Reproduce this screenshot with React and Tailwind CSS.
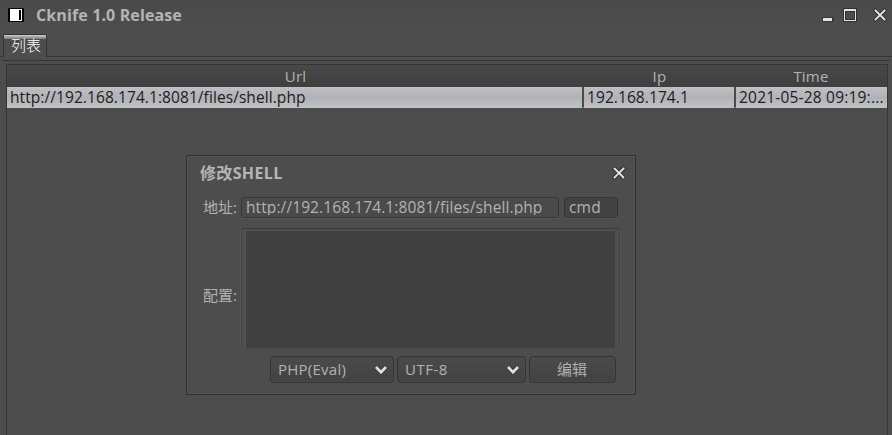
import React from 'react';

function CloseIcon() {
  return (
    <svg width="14" height="14" viewBox="0 0 14 14" fill="none" strokeLinecap="square">
      <path d="M2.5 2.5 11.5 11.5M11.5 2.5 2.5 11.5" stroke="#303030" strokeWidth="3.6" />
      <path d="M2.5 2.5 11.5 11.5M11.5 2.5 2.5 11.5" stroke="#e6e6e6" strokeWidth="1.8" />
    </svg>
  );
}

function Chevron() {
  return (
    <svg width="14" height="10" viewBox="0 0 14 10" fill="none">
      <path d="M2 2 7 7.2 12 2" stroke="#303030" strokeWidth="4.2" />
      <path d="M2 2 7 7.2 12 2" stroke="#dedede" strokeWidth="2.8" />
    </svg>
  );
}

function TitleBar() {
  return (
    <header className="flex h-[34px] items-start bg-gradient-to-b from-[#494949] to-[#4e4e4e]">
      <svg className="ml-2 mt-2" width="16" height="14" viewBox="0 0 16 14">
        <path fill="#000" d="M0 0h16v14H0z" />
        <path fill="#fff" d="M2 1h12v12H2z" />
        <path fill="#000" d="M11 2h2v10h-2z" />
      </svg>
      <h1 className="ml-3 mt-[5px] h-5 w-[240px] whitespace-nowrap text-[16px] font-bold leading-5 tracking-[0.12px] text-[#b5b5b5]">
        Cknife 1.0 Release
      </h1>
      <div className="ml-auto mr-[5px] mt-2 flex h-[14px]">
        <svg className="mr-[9px]" width="12" height="14" viewBox="0 0 12 14">
          <path fill="#373737" d="M0 9h12v5H0z" />
          <path fill="#e3e3e3" d="M1 10h9v3H1z" />
        </svg>
        <svg className="mr-[16px]" width="14" height="14" viewBox="0 0 14 14">
          <path fill="#303030" fillRule="evenodd" d="M0 0h14v14H0zM3 4v7h8V4z" />
          <path fill="#e3e3e3" fillRule="evenodd" d="M1 1h12v12H1zM2 3v9h10V3z" />
        </svg>
        <CloseIcon />
      </div>
    </header>
  );
}

function EditDialog() {
  return (
    <section className="absolute left-[186px] top-[155px] h-60 w-[450px] border border-[#303030] bg-[#4d4d4d] shadow-[inset_1px_1px_0_#555555,inset_-1px_-1px_0_#535353]">
      <div className="flex h-[41px] justify-between pl-[13px] pr-[9px] pt-[7px]">
        <h2 className="h-5 whitespace-nowrap text-[16px] font-bold leading-5 tracking-[0.35px] text-[#b5b5b5]">修改SHELL</h2>
        <div className="mt-[3px]"><CloseIcon /></div>
      </div>
      <div className="flex h-[21px]">
        <span className="w-[54px] whitespace-nowrap pl-4 text-[15px] leading-[21px]">地址:</span>
        <div className="h-[21px] w-[318px] overflow-hidden whitespace-nowrap rounded-[3px] border border-[#353535] bg-[#4a4a4a] pl-1 pb-[2px] shadow-[0_1px_0_#555555]">
          <div className="h-[17px] overflow-hidden text-[15.5px] leading-[19px] tracking-[0.1px]">http://192.168.174.1:8081/files/shell.php</div>
        </div>
        <div className="ml-[5px] h-[21px] w-[54px] rounded-[3px] border border-[#353535] bg-[#424242] pl-1 text-[15.5px] leading-[18px] tracking-[0.2px] shadow-[0_1px_0_#555555]">cmd</div>
      </div>
      <div className="mt-[10px] flex h-[120px]">
        <span className="w-[54px] whitespace-nowrap pl-4 pt-[57px] text-[15px] leading-[21px]">配置:</span>
        <div className="h-[120px] w-[379px] rounded-t-[3px] border-x border-t border-[#3a3a3a] border-x-[#424242] bg-[#505050] px-1 pt-[2px] shadow-[-1px_0_0_#555555,1px_0_0_#555555]">
          <div className="h-[117px] bg-[#404040]" />
        </div>
      </div>
      <div className="ml-[83px] mt-2 flex h-[27px] gap-[3px] text-[15px]">
        <div className="flex w-[124px] items-center justify-between rounded-sm border border-[#333333] bg-gradient-to-b from-[#4b4b4b] to-[#424242] pl-[7px] pr-[5px] shadow-[inset_0_0_0_1px_#494949]">
          <span className="tracking-[0.25px]">PHP(Eval)</span><Chevron />
        </div>
        <div className="flex w-[129px] items-center justify-between rounded-sm border border-[#333333] bg-gradient-to-b from-[#4b4b4b] to-[#424242] pl-[7px] pr-[5px] shadow-[inset_0_0_0_1px_#494949]">
          <span className="tracking-[0.5px]">UTF-8</span><Chevron />
        </div>
        <button className="w-[87px] rounded-sm border border-[#333333] bg-gradient-to-b from-[#4b4b4b] to-[#424242] pr-px shadow-[inset_0_0_0_1px_#494949]">编辑</button>
      </div>
    </section>
  );
}

export default function App() {
  return (
    <main className="relative flex h-[435px] w-[892px] flex-col overflow-hidden bg-[#4d4d4d] font-['Open_Sans','Noto_Sans_CJK_SC',sans-serif] text-[15.5px] text-[#b2b2b2]">
      <TitleBar />
      <nav className="flex h-[23px] items-end">
        <div className="h-px w-[3px] bg-[#353535]" />
        <div className="h-[23px] w-11 rounded-t-[2px] border-x border-t border-[#343434] bg-[#4d4d4d]">
          <div className="h-1 bg-gradient-to-b from-[#d0d0d3] to-[#77777a]" />
          <div className="whitespace-nowrap pl-[7px] text-[15px] font-light leading-[13px] text-[#ffffff]">列表</div>
        </div>
        <div className="h-px flex-1 bg-[#353535]" />
      </nav>
      <div className="h-[7px] shrink-0 px-[2px] pt-[3px]"><div className="h-px bg-[#353535]" /></div>
      <div className="ml-1.5 mr-1 flex-1 border-x border-t border-[#353535] bg-[#4d4d4d]">
        <div className="grid h-[22px] grid-cols-[577px_151px_152px] bg-gradient-to-b from-[#484848] to-[#3f3f3f] text-center text-[15px] leading-[22px] tracking-[0.2px]">
          <span>Url</span><span>Ip</span><span>Time</span>
        </div>
        <div className="grid h-[21px] grid-cols-[575px_150px_151px] gap-x-[2px] border-b border-[#777777] bg-[#4b4b4b] text-[15.5px] leading-[21px] tracking-[0.08px] text-[#202024]">
          <div className="whitespace-nowrap bg-gradient-to-b from-[#bfc0c4] via-[#b1b2b6] to-[#c2c3c6] pl-[3px]">http://192.168.174.1:8081/files/shell.php</div>
          <div className="whitespace-nowrap bg-gradient-to-b from-[#bfc0c4] via-[#b1b2b6] to-[#c2c3c6] pl-[3px]">192.168.174.1</div>
          <div className="overflow-hidden whitespace-nowrap bg-gradient-to-b from-[#bfc0c4] via-[#b1b2b6] to-[#c2c3c6] pl-[3px] tracking-[0.2px]">2021-05-28 09:19:...</div>
        </div>
      </div>
      <EditDialog />
    </main>
  );
}
